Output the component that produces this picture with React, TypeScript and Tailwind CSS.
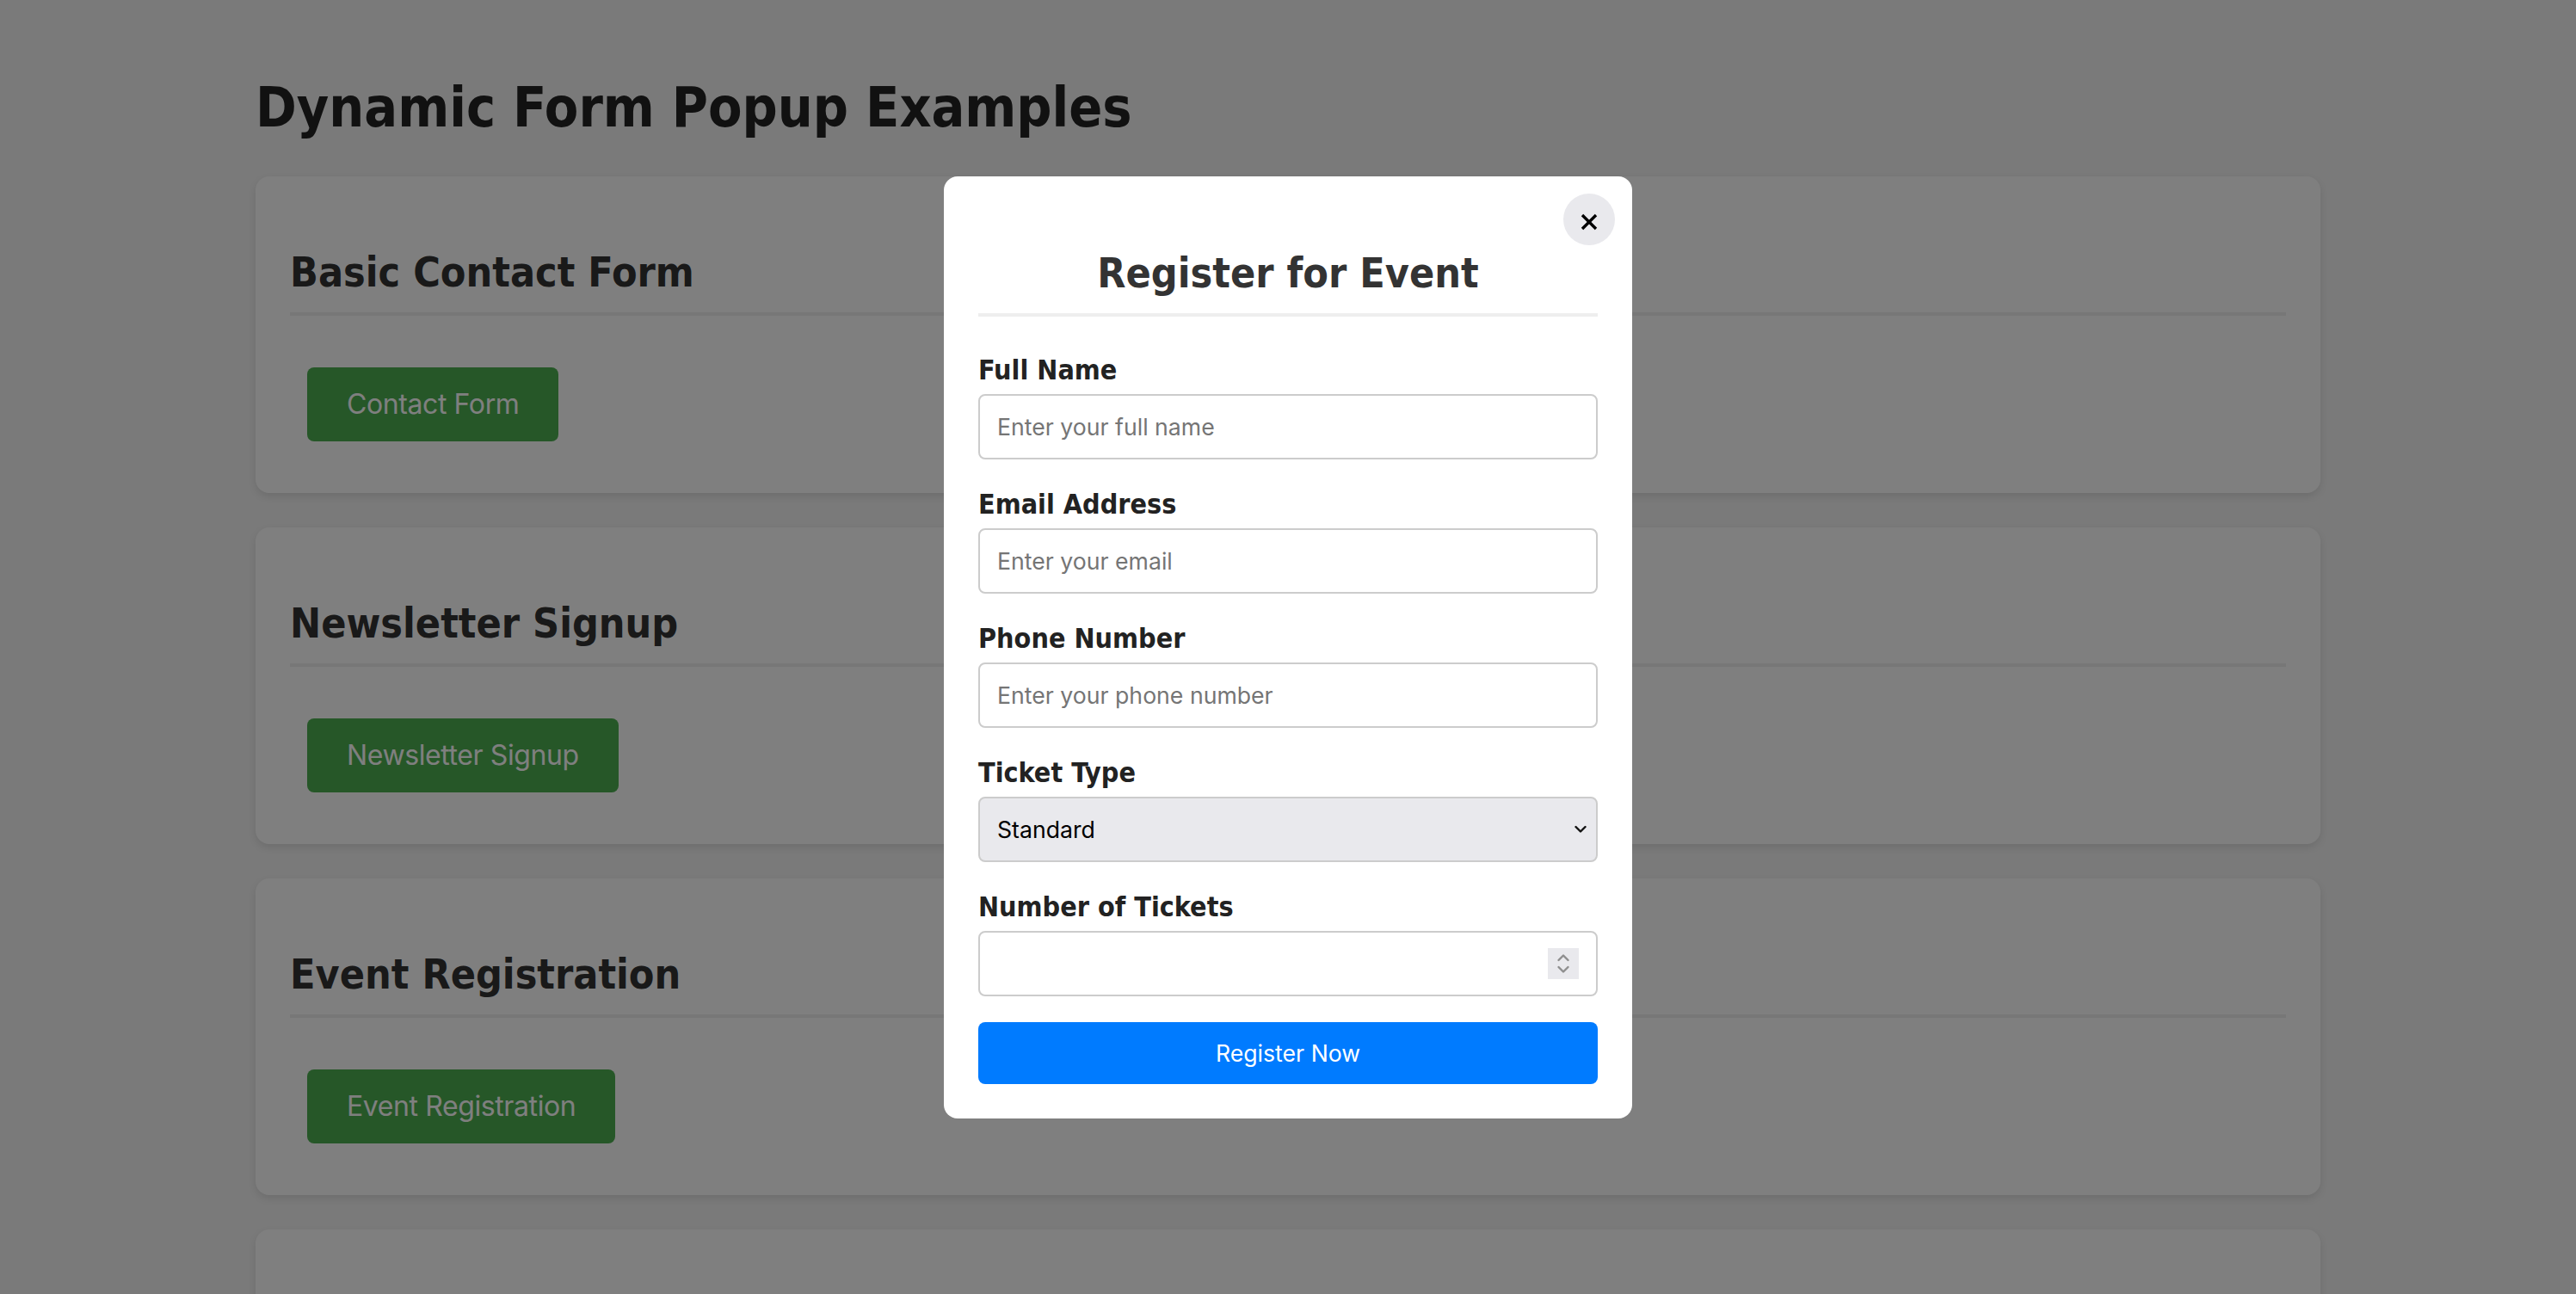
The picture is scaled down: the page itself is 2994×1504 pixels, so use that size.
import React from 'react';

const head = "font-['DejaVu_Sans_Condensed','DejaVu_Sans',sans-serif]";
const sys = "font-['Inter','Liberation_Sans',sans-serif]";

const examples = ['Basic Contact Form', 'Newsletter Signup', 'Event Registration', 'Feedback Survey'];
const buttons = ['Contact Form', 'Newsletter Signup', 'Event Registration', 'Feedback Survey'];

function Field({ label, placeholder }: { label: string; placeholder: string }) {
    return (
        <div className="mb-[33px]">
            <label className="block text-[32px] font-bold leading-[38px] text-[#222] mb-[9px]">{label}</label>
            <input
                placeholder={placeholder}
                className={`block w-full h-[76px] border-2 border-[#ccc] rounded-[8px] px-[20px] text-[26.67px] text-black placeholder:text-[#757575] outline-none ${sys}`}
            />
        </div>
    );
}

export default function App() {
    return (
        <div className={`min-h-screen bg-[#f4f4f4] p-[40px] ${head}`}>
            <div className="mx-auto max-w-[2400px]">
                <h1 className="text-[64px] font-bold leading-[77px] text-[#222] mt-[47px] mb-[41px]">Dynamic Form Popup Examples</h1>

                {examples.map((title, i) => (
                    <div key={title} className="bg-white rounded-[16px] p-[40px] mb-[40px] shadow-[0_4px_10px_rgba(0,0,0,0.1)]">
                        <h2 className="text-[48px] font-bold leading-[58px] text-[#333] mt-[42px] pb-[18px] border-b-4 border-[#eee] mb-[40px]">{title}</h2>
                        <button className={`m-[20px] h-[86px] px-[46px] rounded-[8px] bg-[#4CAF50] text-white text-[32px] tracking-[-0.4px] ${sys}`}>
                            {buttons[i]}
                        </button>
                    </div>
                ))}
            </div>

            {/* popup */}
            <div className="fixed inset-0 bg-black/50 flex items-center justify-center">
                <div className="relative w-[800px] bg-white rounded-[16px] p-[40px]">
                    <button className="absolute top-[20px] right-[20px] w-[60px] h-[60px] rounded-full bg-[#e9e9ed] flex items-center justify-center">
                        <svg className="translate-y-[3px]" width="20" height="20" viewBox="0 0 20 20">
                            <path d="M2 2 L18 18 M18 2 L2 18" stroke="#000" strokeWidth="3.4" />
                        </svg>
                    </button>
                    <h2 className="text-center text-[48px] font-bold leading-[58px] text-[#333] mt-[43px] pb-[18px] border-b-4 border-[#eee] mb-[43px]">Register for Event</h2>

                    <Field label="Full Name" placeholder="Enter your full name" />
                    <Field label="Email Address" placeholder="Enter your email" />
                    <Field label="Phone Number" placeholder="Enter your phone number" />

                    <div className="mb-[33px]">
                        <label className="block text-[32px] font-bold leading-[38px] text-[#222] mb-[9px]">Ticket Type</label>
                        <div className="relative">
                            <select className={`block w-full h-[76px] appearance-none border-2 border-[#ccc] rounded-[8px] bg-[#e9e9ed] px-[20px] text-[26.67px] text-black outline-none ${sys}`}>
                                <option>Standard</option>
                                <option>VIP</option>
                                <option>Student</option>
                            </select>
                            <svg className="absolute right-[13px] top-1/2 -translate-y-1/2 pointer-events-none" width="14" height="9" viewBox="0 0 14 9">
                                <path d="M1.5 1.5 L7 7 L12.5 1.5" fill="none" stroke="#111" strokeWidth="2.4" strokeLinecap="round" strokeLinejoin="round" />
                            </svg>
                        </div>
                    </div>

                    <div className="mb-[30px]">
                        <label className="block text-[32px] font-bold leading-[38px] text-[#222] mb-[9px]">Number of Tickets</label>
                        <div className="flex items-center w-full h-[76px] border-2 border-[#ccc] rounded-[8px] pl-[20px] pr-[20px]">
                            <input className={`flex-1 min-w-0 bg-transparent text-[26.67px] outline-none ${sys}`} />
                            <div className="w-[36px] h-[36px] bg-[#e9e9ed] flex items-center justify-center">
                                <svg width="18" height="30" viewBox="0 0 18 30">
                                    <path d="M3.5 11 L9 5.5 L14.5 11" fill="none" stroke="#8e8e8e" strokeWidth="2.4" strokeLinecap="round" strokeLinejoin="round" />
                                    <path d="M3.5 19 L9 24.5 L14.5 19" fill="none" stroke="#8e8e8e" strokeWidth="2.4" strokeLinecap="round" strokeLinejoin="round" />
                                </svg>
                            </div>
                        </div>
                    </div>

                    <button className={`block w-full h-[72px] rounded-[8px] bg-[#007bff] text-white text-[26.67px] ${sys}`}>Register Now</button>
                </div>
            </div>
        </div>
    );
}
